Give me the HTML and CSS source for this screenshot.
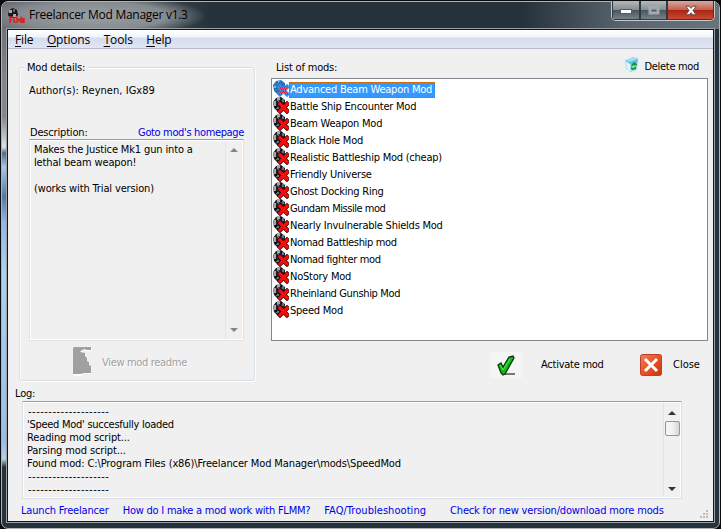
FILE: index.html
```
<!DOCTYPE html>
<html lang="en">
<head>
<meta charset="utf-8">
<title>Freelancer Mod Manager v1.3</title>
<link rel="stylesheet" href="styles.css">
</head>
<body>
<svg width="0" height="0" class="defs">
  <defs>
    <symbol id="mod" viewBox="0 0 17 17">
      <path d="M0 5l3-4 5-1 4 3v8l-4 4-4-1-3-3z" fill="#20242c"/>
      <path d="M0 4h3v5H1zM4 0h3v3l-3 1z" fill="#aaa4a4"/>
      <path d="M5 4h2v3H5zM9 2h2v3H9zM3 10h3v2H3z" fill="#64708f"/>
      <path d="M2 9h2v2H2zM8 1h1v2H8z" fill="#05070b"/>
      <path d="M7 7l7 7M14 7l-7 7" stroke="#290000" stroke-width="4.600" stroke-linecap="square"/>
      <path d="M7 7l7 7M14 7l-7 7" stroke="#f3100c" stroke-width="3.200" stroke-linecap="square"/>
    </symbol>
  </defs>
</svg>
<div class="window">
  <header class="titlebar">
    <svg class="logo" width="17" height="17" viewBox="0 0 17 17">
      <path d="M1 2l4-2 4 2 1 5-3 3H2L0 7z" fill="#15171c"/><path d="M1 2h3v3H1zM5 6h3v3H5z" fill="#aaa8ad"/><path d="M5 1h2v3H5z" fill="#596480"/>
      <path d="M1 9h4M2 9v6M2 12h2M6 9v5h2M9 15v-5l2 3 2-3v5M14 15v-5l1 3 1-3v5" fill="none" stroke="#dd2222" stroke-width="1.500"/>
    </svg>
    <span class="title">Freelancer Mod Manager v1.3</span>
    <div class="controls">
      <span class="ctl min"><svg width="12" height="6"><rect x=".5" y=".5" width="11" height="4" fill="#fff" stroke="#555b66"/></svg></span>
      <span class="ctl max"><svg width="12" height="10"><rect x="2" y="2" width="8" height="6" fill="none" stroke="#a5a9ae" stroke-width="3"/></svg></span>
      <span class="ctl x"><svg width="12" height="11" viewBox="0 0 14 12"><path d="M1 1h4l2 2.500L9 1h4L9.300 6l3.700 5H9L7 8.500 5 11H1l3.700-5z" fill="#fff" stroke="#5b3a3d"/></svg></span>
    </div>
  </header>
  <div class="client">
    <nav class="menu"><span><u>F</u>ile</span><span><u>O</u>ptions</span><span><u>T</u>ools</span><span><u>H</u>elp</span></nav>
    <main class="main">
      <section class="details">
        <h2 class="legend">Mod details:</h2>
        <p class="author">Author(s): Reynen, IGx89</p>
        <div class="deschead"><span class="desclabel">Description:</span><a class="homepage">Goto mod's homepage</a></div>
        <div class="descbox">
          <div class="desctext">Makes the Justice Mk1 gun into a<br>lethal beam weapon!<br><br>(works with Trial version)</div>
          <div class="scroll off"><svg width="8" height="4"><path d="M0 4l4-4 4 4z"/></svg><svg width="8" height="4"><path d="M0 0h8l-4 4z"/></svg></div>
        </div>
        <div class="readme">
          <svg width="19" height="29" viewBox="0 0 19 29"><path d="M2 1h17v3h-6l-3-1-2 3 5 2 1 5 2 2v4l2 2v6h-7l-4 2-8-1V3z" fill="#fff"/><path d="M1 0h17v3h-5l-1-1-3 1-2 2 5 1v3l2 2v3l2 1v3l2 1v7h-6l-5 1H1L0 27V1z" fill="#a0a0a0"/></svg>
          <span>View mod readme</span>
        </div>
      </section>
      <section class="mods">
        <div class="modshead"><span class="listlabel">List of mods:</span>
          <div class="delete"><svg width="14" height="15" viewBox="0 0 14 15"><path d="M0 3l8-3 5 1v3l-1 9-6 2-5-3z" fill="#a5dbee"/><path d="M0 3l5 2 8-3-1 4-7 1z" fill="#55bde6"/><path d="M1 5l4 2v7l-3-2z" fill="#e1f6fc"/><path d="M6 8l3-3 3 2v2l-1-1-2 1-1-1-1 2zM6 10l2 1 2-1 1-1v3l-3 1-2-1z" fill="#14972e"/></svg><span>Delete mod</span></div>
        </div>
        <ul class="list">
          <li class="sel"><svg width="16" height="17" viewBox="0 0 16 17"><path d="M0 5l3-4 5-1 4 3v8l-4 4-4-1-3-3z" fill="#2f7cc4"/><path d="M1 5h2v3H1zM5 1h2v2H5z" fill="#79b4e8"/><path d="M0.500 5.500l11-1M1 8.500h9M3 11.500h6M4 2.500h6" stroke="#1d4f86" stroke-dasharray="1 1"/><path d="M7 7l7 7M14 7l-7 7" stroke="#3f8fe6" stroke-width="4.500" stroke-linecap="square"/><path d="M6 6.500h3M12 6.500h3M7 8.500h7M8 10.500h5M7 12.500h7M6 14.500h3M12 14.500h3M7 7.500h3M11 7.500h3M8 9.500h5M8 11.500h5M6 13.500h3M12 13.500h3" stroke="#f0203c" stroke-dasharray="1 1"/></svg><span>Advanced Beam Weapon Mod</span></li>
          <li><svg width="16" height="17"><use href="#mod" width="17" height="17"/></svg><span>Battle Ship Encounter Mod</span></li>
          <li><svg width="16" height="17"><use href="#mod" width="17" height="17"/></svg><span>Beam Weapon Mod</span></li>
          <li><svg width="16" height="17"><use href="#mod" width="17" height="17"/></svg><span>Black Hole Mod</span></li>
          <li><svg width="16" height="17"><use href="#mod" width="17" height="17"/></svg><span>Realistic Battleship Mod (cheap)</span></li>
          <li><svg width="16" height="17"><use href="#mod" width="17" height="17"/></svg><span>Friendly Universe</span></li>
          <li><svg width="16" height="17"><use href="#mod" width="17" height="17"/></svg><span>Ghost Docking Ring</span></li>
          <li><svg width="16" height="17"><use href="#mod" width="17" height="17"/></svg><span class="tight">Gundam Missile mod</span></li>
          <li><svg width="16" height="17"><use href="#mod" width="17" height="17"/></svg><span>Nearly Invulnerable Shields Mod</span></li>
          <li><svg width="16" height="17"><use href="#mod" width="17" height="17"/></svg><span class="snug">Nomad Battleship mod</span></li>
          <li><svg width="16" height="17"><use href="#mod" width="17" height="17"/></svg><span class="snug">Nomad fighter mod</span></li>
          <li><svg width="16" height="17"><use href="#mod" width="17" height="17"/></svg><span>NoStory Mod</span></li>
          <li><svg width="16" height="17"><use href="#mod" width="17" height="17"/></svg><span class="snug">Rheinland Gunship Mod</span></li>
          <li><svg width="16" height="17"><use href="#mod" width="17" height="17"/></svg><span>Speed Mod</span></li>
        </ul>
        <div class="actions">
          <span class="check"><svg width="19" height="21" viewBox="0 0 19 21"><path d="M6 19h12" stroke="#777" stroke-width="2"/><path d="M1 10l3-2 2 4 6-10 4-1 1 2-9 16-2 1-2-2z" fill="#16b51b" stroke="#063b08" stroke-width="1.300"/><path d="M3 10l3 5 7-11" stroke="#55ed50" fill="none"/></svg></span>
          <span class="activate">Activate mod</span>
          <svg class="closeicon" width="22" height="22" viewBox="0 0 22 22"><defs><linearGradient id="red" x2="1" y2="1"><stop stop-color="#ee8061"/><stop offset=".5" stop-color="#ea5227"/><stop offset="1" stop-color="#c93408"/></linearGradient></defs><rect x=".5" y=".5" width="21" height="21" rx="2" fill="url(#red)" stroke="#bd4125"/><path d="M5 5l12 12M17 5L5 17" stroke="#fff" stroke-width="3"/></svg>
          <span class="close">Close</span>
        </div>
      </section>
    </main>
    <section class="log">
      <h2 class="loglabel">Log:</h2>
      <div class="logbox">
        <div class="logtext"><span class="dash">--------------------</span><span class="loaded">'Speed Mod' succesfully loaded</span><span>Reading mod script...</span><span>Parsing mod script...</span><span class="path">Found mod: C:\Program Files (x86)\Freelancer Mod Manager\mods\SpeedMod</span><span class="dash">--------------------</span><span class="dash">--------------------</span></div>
        <div class="scroll on"><svg width="8" height="4"><path d="M0 4l4-4 4 4z"/></svg><i class="thumb"></i><svg width="8" height="4"><path d="M0 0h8l-4 4z"/></svg></div>
      </div>
    </section>
    <footer class="links"><a>Launch Freelancer</a><a class="how">How do I make a mod work with FLMM?</a><a class="faq">FAQ/Troubleshooting</a><a>Check for new version/download more mods</a>
      <svg class="grip" width="9" height="9"><path d="M6 0h2v2H6zM3 3h2v2H3zM6 3h2v2H6zM0 6h2v2H0zM3 6h2v2H3zM6 6h2v2H6z" fill="#bbb"/></svg>
    </footer>
  </div>
</div>
</body>
</html>
```

FILE: styles.css
```
* { box-sizing: border-box; }
body { margin: 0; background: #090b0d; overflow: hidden; font: 11px/13px "DejaVu Sans Condensed", "DejaVu Sans", sans-serif; font-stretch: condensed; letter-spacing: -0.18px; color: #000; }
h2, p, ul { margin: 0; padding: 0; font: inherit; list-style: none; }
svg { display: block; flex: none; }
span, a, h2, p { white-space: nowrap; }
.defs { position: absolute; }
.window { width: 719px; height: 528px; margin: 1px 0 0 1px; padding: 0 5px 7px 6px; border: 1px solid #aeb4b8; border-radius: 7px; display: flex; flex-direction: column;
  background: linear-gradient(90deg, transparent 8px, #26323b 8px), linear-gradient(180deg, #66686e 0, #85868c 85px, #85868c 115px, #dce2e8 145px, #546a86 151px, #a8c7e8 165px, #547aa3 195px, #8db8e4 220px, #acd0f2 270px, #96bfe8 440px, #b6d0e8 457px, #26323b 465px); }
.titlebar { height: 27px; margin: 0 -5px 0 -6px; display: flex; align-items: flex-start; border-radius: 6px 6px 0 0;
  background: radial-gradient(ellipse 150px 28px at 90px 14px, #9b9fa2 0, #858b8f 50%, transparent 76%), linear-gradient(90deg, #666a70 0, #606970 60px, #26323b 210px, #26323b 520px, #5a6570 625px, #68727b 710px); }
.logo { margin: 6px 0 0 6px; }
.title { margin: 4px 0 0 4px; font: 12px/18px "Open Sans", sans-serif; letter-spacing: -0.28px; }
.controls { display: flex; width: 104px; margin-left: auto; margin-right: 4px; margin-top: -1px; border: 1px solid #c4c9cc; border-top: 0; border-radius: 0 0 5px 5px; height: 20px; overflow: hidden; }
.ctl { display: flex; align-items: center; justify-content: center; height: 19px; border: 1px solid #303a43; border-top: 0; background: linear-gradient(#b3b8bc, #868e94 48%, #4a545d 50%, #77818a); }
.min { width: 28px; } .max { width: 27px; } .x { width: 47px; background: linear-gradient(#d8a7a0, #c4624f 48%, #ab2412 50%, #c74a35); }
.min svg { margin-top: 4px; }
.client { width: 705px; height: 491px; flex: none; background: #f0f0f0; outline: 1px solid #10161b; box-shadow: 0 0 0 2px #9ba2a7; margin-top: 1px; display: flex; flex-direction: column; }
.menu { height: 19px; flex: none; display: flex; padding-left: 7px; border-bottom: 1px solid #b9bcc9; background: linear-gradient(#fff 0, #f0f4fa 7px, #d5dcec 8px, #e1e6f6 19px); font: 12px/20px "Open Sans", sans-serif; letter-spacing: -0.15px; }
.menu span { margin-right: 13.5px; } .menu u { text-underline-offset: 2px; text-decoration-thickness: 1px; }
.main { display: grid; grid-template-columns: 236px 437px; column-gap: 16px; padding-left: 11px; height: 334px; flex: none; }
.details { margin-top: 18px; height: 314px; border: 1px solid #d5dfe5; box-shadow: inset 1px 1px #fff, 1px 1px #fff; border-radius: 3px; padding: 0 9px; display: flex; flex-direction: column; }
.legend { align-self: flex-start; background: #f0f0f0; padding: 0 3px; margin: -7px 0 0 -5px; }
.author { margin-top: 10px; letter-spacing: 0.04px; }
.deschead { display: flex; justify-content: space-between; margin-top: 29px; padding: 0 1px; }
.homepage { letter-spacing: -0.35px; }
a { color: #0000e8; }
.descbox { margin-top: 0; width: 215px; height: 202px; display: flex; border: 1px solid #dfe3e6; border-top-color: #9a9ca0; box-shadow: inset 1px 1px #fff, inset -1px -1px #fff; }
.desctext { width: 196px; padding: 3px 0 0 4px; letter-spacing: -0.14px; }
.scroll { display: flex; flex-direction: column; align-items: center; width: 17px; margin: 1px; }
.off { border-left: 1px solid #e1e3e5; justify-content: space-between; padding: 7px 0; fill: #858585; }
.readme { display: flex; align-items: center; gap: 10px; height: 29px; margin: 6px 0 0 44px; color: #a0a0a0; text-shadow: 1px 1px #fff; letter-spacing: -0.32px; }
.readme span { padding-top: 2px; }
.mods { width: 437px; }
.modshead { height: 29px; display: flex; justify-content: space-between; padding: 12px 8px 0 5px; }
.delete { display: flex; gap: 6px; margin: -4px 1px 0 0; letter-spacing: -0.32px; } .delete span { margin-top: 3px; }
.list { height: 263px; border: 1px solid #828790; background: #fff; padding: 2px 1px 0; letter-spacing: -0.23px; }
.list li { height: 17px; display: flex; align-items: center; }
.list li svg { margin-top: -2px; }
.list li span { padding: 0 1px; line-height: 16px; }
.list li .snug { letter-spacing: -0.35px; } .list li .tight { letter-spacing: -0.46px; }
.list .sel span { background: #3399ff; color: #fff; outline: 1px dotted #cc6600; outline-offset: -1px; padding-right: 3px; }
.actions { height: 47px; display: flex; align-items: center; padding-left: 219px; letter-spacing: -0.25px; }
.check { width: 32px; height: 26px; background: #f5f5f5; padding: 3px 7px; margin-right: 19px; }
.activate { width: 99px; } .close { margin-left: 11px; letter-spacing: 0; }
.log { padding-left: 7px; height: 117px; flex: none; }
.loglabel { height: 18px; padding-top: 4px; }
.logbox { margin-left: 7px; width: 660px; height: 98px; display: flex; justify-content: space-between; border: 1px solid #dadde5; border-top-color: #9b9da2; box-shadow: inset 1px 1px #fff, inset -1px -1px #fff; }
.logtext { padding: 3px 0 0 4px; display: flex; flex-direction: column; letter-spacing: -0.12px; }
.logtext .dash { letter-spacing: 0.5px; padding-left: 1px; } .logtext .loaded { letter-spacing: -0.27px; }
.on { justify-content: flex-start; padding-top: 8px; border-left: 1px solid #e1e3e5; fill: #333; }
.on svg:last-child { margin-top: auto; margin-bottom: 6px; }
.thumb { width: 15px; height: 15px; margin-top: 6px; border: 1px solid #92979b; border-radius: 2px; background: linear-gradient(90deg, #f4f4f4 45%, #d4d5d7); }
.links { display: flex; padding: 4px 4px 0 13px; height: 21px; }
.links a { margin-right: 14px; letter-spacing: -0.17px; } .links .how { letter-spacing: -0.23px; } .links .faq { margin-right: 24px; letter-spacing: 0.05px; }
.grip { margin: 6px 0 0 auto; }
```
